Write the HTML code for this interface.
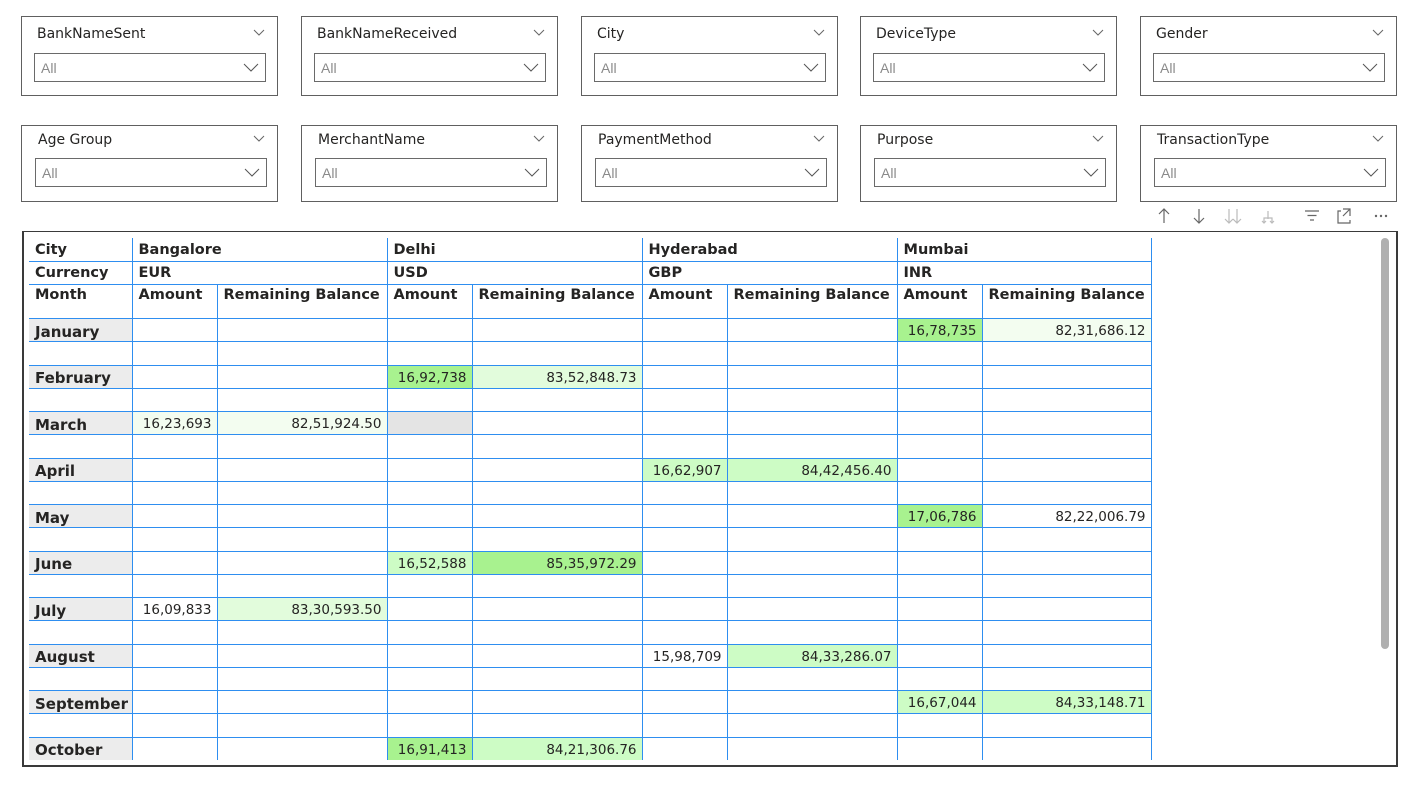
<!DOCTYPE html>
<html><head><meta charset="utf-8"><style>
*{box-sizing:border-box;margin:0;padding:0}
body{width:1416px;height:788px;background:#fff;position:relative;overflow:hidden;font-family:"DejaVu Sans","Liberation Sans",sans-serif;color:#252423}
.sl{position:absolute;width:257px;border:1px solid #606060;background:#fff}
.sl .t{position:absolute;left:15px;top:9px;font-size:14px;color:#252423}
.sl .c{position:absolute;right:12px;top:12px;width:12px;height:7px}
.sl .d{position:absolute;left:12px;top:36px;width:232px;height:29px;border:1px solid #6a6a6a}
.sl .d span{position:absolute;left:6px;top:6px;font-family:"Liberation Sans",sans-serif;font-size:14px;color:#8a8a8a}
.sl .d svg{position:absolute;right:6px;top:9px}
#box{position:absolute;left:22px;top:231px;width:1376px;height:536px;border:2px solid #3a3a3a;border-top-width:1px;border-left-width:2px}
table{position:absolute;left:29px;top:238px;border-collapse:collapse;table-layout:fixed;width:1122px}
td{border:1px solid #2e8ef0;font-size:13.5px;padding:2px 5px 0;white-space:nowrap;overflow:hidden;height:23.26px}
td.h{font-weight:bold;font-size:14.5px;padding-left:6px;padding-top:1px}
tr.hd td{border-top:none}
td.r{background:#ececec;font-weight:bold;font-size:15px;padding-left:6px;padding-top:3px}
td.n{text-align:right}
.B{background:#a8f28f}.L{background:#cdfcc5}.V{background:#f3fdf0}.G{background:#e4e4e4}.M{background:#e2fcdc}
tr td:first-child{border-left:none}
</style></head><body>

<div class="sl" style="left:21px;top:16px;height:80px"><div class="t">BankNameSent</div><svg class="c" viewBox="0 0 12 7"><path d="M1 1l5 5 5-5" fill="none" stroke="#666"/></svg><div class="d"><span>All</span><svg width="16" height="9" viewBox="0 0 16 9"><path d="M1 1l7 7 7-7" fill="none" stroke="#555"/></svg></div></div>
<div class="sl" style="left:301px;top:16px;height:80px"><div class="t">BankNameReceived</div><svg class="c" viewBox="0 0 12 7"><path d="M1 1l5 5 5-5" fill="none" stroke="#666"/></svg><div class="d"><span>All</span><svg width="16" height="9" viewBox="0 0 16 9"><path d="M1 1l7 7 7-7" fill="none" stroke="#555"/></svg></div></div>
<div class="sl" style="left:581px;top:16px;height:80px"><div class="t">City</div><svg class="c" viewBox="0 0 12 7"><path d="M1 1l5 5 5-5" fill="none" stroke="#666"/></svg><div class="d"><span>All</span><svg width="16" height="9" viewBox="0 0 16 9"><path d="M1 1l7 7 7-7" fill="none" stroke="#555"/></svg></div></div>
<div class="sl" style="left:860px;top:16px;height:80px"><div class="t">DeviceType</div><svg class="c" viewBox="0 0 12 7"><path d="M1 1l5 5 5-5" fill="none" stroke="#666"/></svg><div class="d"><span>All</span><svg width="16" height="9" viewBox="0 0 16 9"><path d="M1 1l7 7 7-7" fill="none" stroke="#555"/></svg></div></div>
<div class="sl" style="left:1140px;top:16px;height:80px"><div class="t">Gender</div><svg class="c" viewBox="0 0 12 7"><path d="M1 1l5 5 5-5" fill="none" stroke="#666"/></svg><div class="d"><span>All</span><svg width="16" height="9" viewBox="0 0 16 9"><path d="M1 1l7 7 7-7" fill="none" stroke="#555"/></svg></div></div>

<div class="sl" style="left:21px;top:125px;height:77px"><div class="t" style="left:16px;top:6px">Age Group</div><svg class="c" style="top:9px" viewBox="0 0 12 7"><path d="M1 1l5 5 5-5" fill="none" stroke="#666"/></svg><div class="d" style="left:13px;top:32px"><span>All</span><svg width="16" height="9" viewBox="0 0 16 9"><path d="M1 1l7 7 7-7" fill="none" stroke="#555"/></svg></div></div>
<div class="sl" style="left:301px;top:125px;height:77px"><div class="t" style="left:16px;top:6px">MerchantName</div><svg class="c" style="top:9px" viewBox="0 0 12 7"><path d="M1 1l5 5 5-5" fill="none" stroke="#666"/></svg><div class="d" style="left:13px;top:32px"><span>All</span><svg width="16" height="9" viewBox="0 0 16 9"><path d="M1 1l7 7 7-7" fill="none" stroke="#555"/></svg></div></div>
<div class="sl" style="left:581px;top:125px;height:77px"><div class="t" style="left:16px;top:6px">PaymentMethod</div><svg class="c" style="top:9px" viewBox="0 0 12 7"><path d="M1 1l5 5 5-5" fill="none" stroke="#666"/></svg><div class="d" style="left:13px;top:32px"><span>All</span><svg width="16" height="9" viewBox="0 0 16 9"><path d="M1 1l7 7 7-7" fill="none" stroke="#555"/></svg></div></div>
<div class="sl" style="left:860px;top:125px;height:77px"><div class="t" style="left:16px;top:6px">Purpose</div><svg class="c" style="top:9px" viewBox="0 0 12 7"><path d="M1 1l5 5 5-5" fill="none" stroke="#666"/></svg><div class="d" style="left:13px;top:32px"><span>All</span><svg width="16" height="9" viewBox="0 0 16 9"><path d="M1 1l7 7 7-7" fill="none" stroke="#555"/></svg></div></div>
<div class="sl" style="left:1140px;top:125px;height:77px"><div class="t" style="left:16px;top:6px">TransactionType</div><svg class="c" style="top:9px" viewBox="0 0 12 7"><path d="M1 1l5 5 5-5" fill="none" stroke="#666"/></svg><div class="d" style="left:13px;top:32px"><span>All</span><svg width="16" height="9" viewBox="0 0 16 9"><path d="M1 1l7 7 7-7" fill="none" stroke="#555"/></svg></div></div>

<svg style="position:absolute;left:1150px;top:205px" width="250" height="24" viewBox="0 0 250 24" fill="none" stroke-width="1.2">
<g stroke="#666"><path d="M14 4v14M9 9l5-5 5 5"/><path d="M49 4v14M44 13l5 5 5-5"/></g>
<g stroke="#bbb"><path d="M79 4v14M75 14l4 4 4-4M87 4v14M83 14l4 4 4-4"/><path d="M118 6v8M114 18v-5h8v5M112 16l2 2 2-2M120 16l2 2 2-2"/></g>
<g stroke="#666"><path d="M155 6h14M157.5 10.5h9M160 15h4"/><path d="M191 6h-3v12h12v-3M193 4h7v7M200 4l-7 7"/></g>
<g fill="#666" stroke="none"><circle cx="226" cy="11" r="1.2"/><circle cx="231" cy="11" r="1.2"/><circle cx="236" cy="11" r="1.2"/></g>
</svg>

<div id="box"></div>
<div style="position:absolute;left:1381px;top:238px;width:8px;height:411px;border-radius:4px;background:#b0b0b0"></div>

<table>
<colgroup><col style="width:103px"><col style="width:85px"><col style="width:170px"><col style="width:85px"><col style="width:170px"><col style="width:85px"><col style="width:170px"><col style="width:85px"><col style="width:169px"></colgroup>
<tr class="hd"><td class="h" style="height:23px">City</td><td class="h" colspan="2">Bangalore</td><td class="h" colspan="2">Delhi</td><td class="h" colspan="2">Hyderabad</td><td class="h" colspan="2">Mumbai</td></tr>
<tr><td class="h" style="height:23px">Currency</td><td class="h" colspan="2">EUR</td><td class="h" colspan="2">USD</td><td class="h" colspan="2">GBP</td><td class="h" colspan="2">INR</td></tr>
<tr><td class="h" style="height:34px;vertical-align:top;padding-top:2px">Month</td><td class="h" style="vertical-align:top;padding-top:2px">Amount</td><td class="h" style="vertical-align:top;padding-top:2px">Remaining Balance</td><td class="h" style="vertical-align:top;padding-top:2px">Amount</td><td class="h" style="vertical-align:top;padding-top:2px">Remaining Balance</td><td class="h" style="vertical-align:top;padding-top:2px">Amount</td><td class="h" style="vertical-align:top;padding-top:2px">Remaining Balance</td><td class="h" style="vertical-align:top;padding-top:2px">Amount</td><td class="h" style="vertical-align:top;padding-top:2px">Remaining Balance</td></tr>
<tr><td class="r">January</td><td></td><td></td><td></td><td></td><td></td><td></td><td class="n B">16,78,735</td><td class="n V">82,31,686.12</td></tr>
<tr><td></td><td></td><td></td><td></td><td></td><td></td><td></td><td></td><td></td></tr>
<tr><td class="r">February</td><td></td><td></td><td class="n B">16,92,738</td><td class="n M">83,52,848.73</td><td></td><td></td><td></td><td></td></tr>
<tr><td></td><td></td><td></td><td></td><td></td><td></td><td></td><td></td><td></td></tr>
<tr><td class="r">March</td><td class="n V">16,23,693</td><td class="n V">82,51,924.50</td><td class="G"></td><td></td><td></td><td></td><td></td><td></td></tr>
<tr><td></td><td></td><td></td><td></td><td></td><td></td><td></td><td></td><td></td></tr>
<tr><td class="r">April</td><td></td><td></td><td></td><td></td><td class="n L">16,62,907</td><td class="n L">84,42,456.40</td><td></td><td></td></tr>
<tr><td></td><td></td><td></td><td></td><td></td><td></td><td></td><td></td><td></td></tr>
<tr><td class="r">May</td><td></td><td></td><td></td><td></td><td></td><td></td><td class="n B">17,06,786</td><td class="n">82,22,006.79</td></tr>
<tr><td></td><td></td><td></td><td></td><td></td><td></td><td></td><td></td><td></td></tr>
<tr><td class="r">June</td><td></td><td></td><td class="n L">16,52,588</td><td class="n B">85,35,972.29</td><td></td><td></td><td></td><td></td></tr>
<tr><td></td><td></td><td></td><td></td><td></td><td></td><td></td><td></td><td></td></tr>
<tr><td class="r">July</td><td class="n">16,09,833</td><td class="n M">83,30,593.50</td><td></td><td></td><td></td><td></td><td></td><td></td></tr>
<tr><td></td><td></td><td></td><td></td><td></td><td></td><td></td><td></td><td></td></tr>
<tr><td class="r">August</td><td></td><td></td><td></td><td></td><td class="n">15,98,709</td><td class="n L">84,33,286.07</td><td></td><td></td></tr>
<tr><td></td><td></td><td></td><td></td><td></td><td></td><td></td><td></td><td></td></tr>
<tr><td class="r">September</td><td></td><td></td><td></td><td></td><td></td><td></td><td class="n L">16,67,044</td><td class="n L">84,33,148.71</td></tr>
<tr><td></td><td></td><td></td><td></td><td></td><td></td><td></td><td></td><td></td></tr>
<tr><td class="r" style="border-bottom:none">October</td><td style="border-bottom:none"></td><td style="border-bottom:none"></td><td class="n B" style="border-bottom:none">16,91,413</td><td class="n L" style="border-bottom:none">84,21,306.76</td><td style="border-bottom:none"></td><td style="border-bottom:none"></td><td style="border-bottom:none"></td><td style="border-bottom:none"></td></tr>
</table>
</body></html>
